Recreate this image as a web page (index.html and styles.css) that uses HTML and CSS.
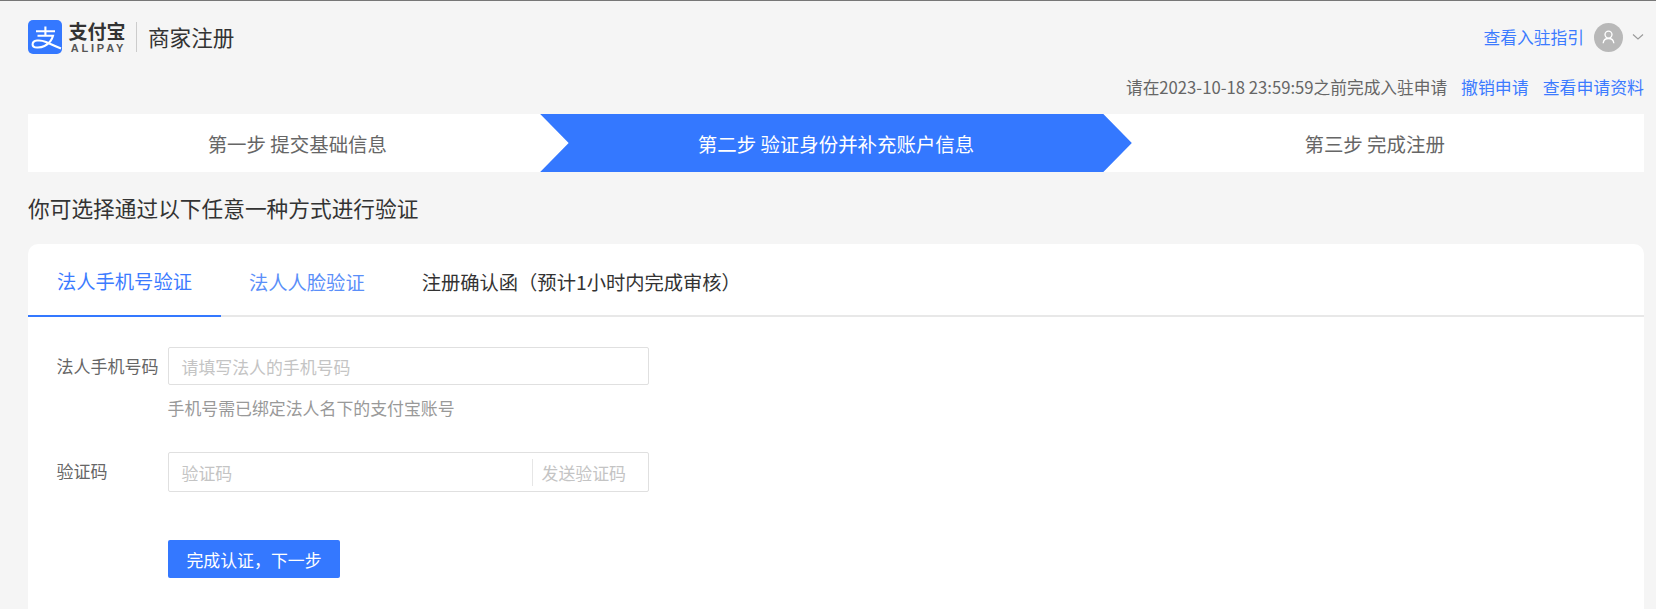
FILE: index.html
```html
<!DOCTYPE html>
<html lang="zh-CN">
<head>
<meta charset="utf-8">
<title>商家注册</title>
<link rel="stylesheet" href="styles.css">
</head>
<body>
<div class="page">
  <header class="top">
    <div class="brand">
      <svg class="logo-icon" viewBox="0 0 34 34" width="34" height="34" aria-hidden="true">
        <rect width="34" height="34" rx="5" fill="#3478ff"/>
        <path d="M8 11.2H27M17.4 6.5V16M9.5 15.8H25C24 20 21 23.8 16.5 26C12.5 28 4.6 28.6 4.6 24.4C4.6 20 12 19.4 18 22C22 23.7 26 25.8 33 28.4" fill="none" stroke="#fff" stroke-width="2.1"/>
      </svg>
      <div class="logo-text">
        <span class="logo-cn">支付宝</span>
        <span class="logo-en">ALIPAY</span>
      </div>
      <span class="brand-sep"></span>
      <span class="brand-title">商家注册</span>
    </div>
    <div class="user">
      <a class="link">查看入驻指引</a>
      <span class="avatar">
        <svg viewBox="0 0 30 30" width="30" height="30" aria-hidden="true">
          <circle cx="15" cy="12" r="3.6" fill="none" stroke="#fff" stroke-width="1.4"/>
          <path d="M9.5 21C9.8 17.6 12 16 15 16S20.2 17.6 20.5 21" fill="none" stroke="#fff" stroke-width="1.4"/>
        </svg>
      </span>
      <svg class="chev" viewBox="0 0 12 8" width="12" height="8" aria-hidden="true"><path d="M1 1.5L6 6L11 1.5" fill="none" stroke="#999" stroke-width="1.1"/></svg>
    </div>
  </header>

  <div class="deadline">
    <span class="deadline-text">请在2023-10-18 23:59:59之前完成入驻申请</span>
    <a class="link">撤销申请</a>
    <a class="link">查看申请资料</a>
  </div>

  <div class="steps">
    <div class="step">第一步 提交基础信息</div>
    <div class="step step-active">第二步 验证身份并补充账户信息</div>
    <div class="step">第三步 完成注册</div>
  </div>

  <h1 class="headline">你可选择通过以下任意一种方式进行验证</h1>

  <section class="card">
    <nav class="tabs">
      <a class="tab tab-active">法人手机号验证</a>
      <a class="tab tab-link">法人人脸验证</a>
      <a class="tab tab-plain">注册确认函（预计1小时内完成审核）</a>
    </nav>
    <form class="form">
      <div class="row">
        <label class="label">法人手机号码</label>
        <div class="field">
          <div class="input"><span class="ph">请填写法人的手机号码</span></div>
          <p class="help">手机号需已绑定法人名下的支付宝账号</p>
        </div>
      </div>
      <div class="row row-code">
        <label class="label">验证码</label>
        <div class="field">
          <div class="input input-code">
            <span class="ph">验证码</span>
            <span class="send">发送验证码</span>
          </div>
        </div>
      </div>
      <button class="submit" type="button">完成认证，下一步</button>
    </form>
  </section>
</div>
</body>
</html>
```
FILE: styles.css
```css
* { box-sizing: border-box; }
html, body { margin: 0; height: 100%; overflow: hidden; }
body {
  background: #f5f5f5;
  border-top: 1px solid #777;
  font-family: "Noto Sans CJK SC", "Noto Sans", sans-serif;
  color: #333;
}
.page { display: flex; flex-direction: column; height: 100%; padding: 0 12px 0 28px; }
.link { color: #3c7bff; }

.top { display: flex; flex: none; justify-content: space-between; align-items: center; height: 72px; }
.brand { display: flex; align-items: center; }
.logo-icon { display: block; }
.logo-text { display: flex; flex-direction: column; align-items: center; margin-left: 6px; width: 58px; color: #333; }
.logo-cn { font-size: 19px; font-weight: 700; line-height: 22px; }
.logo-en { font-family: "Liberation Sans", sans-serif; font-size: 11px; line-height: 12px; letter-spacing: 2.8px; margin-right: -2.8px; font-weight: 700; color: #555; }
.brand-sep { width: 1px; height: 30px; background: #ccc; margin: 0 11px 0 10px; }
.brand-title { font-size: 21.6px; line-height: 30px; color: #333; }

.user { display: flex; align-items: center; font-size: 16.75px; }
.avatar { width: 29px; height: 29px; border-radius: 50%; background: #b8b8b8; margin-left: 10px; }
.avatar svg { display: block; width: 29px; height: 29px; }
.chev { margin-left: 9px; }

.deadline { display: flex; flex: none; justify-content: flex-end; gap: 14px; height: 41px; align-items: center; font-size: 16.9px; color: #666; padding-bottom: 14px; }
.deadline-text { font-size: 16.7px; }

.steps { display: grid; flex: none; grid-template-columns: repeat(3, 1fr); background: #fff; height: 58px; }
.step { display: flex; align-items: center; justify-content: center; font-size: 19.45px; color: #666; }
.step-active {
  margin: 0 -26.5px;
  background: #3478ff;
  color: #fff;
  clip-path: polygon(0 0, calc(100% - 28.5px) 0, 100% 50%, calc(100% - 28.5px) 100%, 0 100%, 28.5px 50%);
}

.headline { flex: none; margin: 0; height: 72px; display: flex; align-items: center; font-size: 21.7px; font-weight: 400; color: #333; padding-bottom: 2px; }

.card { flex: 1; min-height: 0; background: #fff; border-radius: 10px 10px 0 0; }
.tabs { display: flex; height: 73px; border-bottom: 2px solid #e8e8e8; }
.tab { display: flex; align-items: center; height: 73px; padding: 2px 28px 0; font-size: 19.3px; color: #333; }
.tab-active { width: 193px; padding-left: 29px; color: #3c7bff; border-bottom: 2px solid #3478ff; }
.tab-link { color: #5b8ff9; }
.tab-plain { padding-left: 29px; }

.form { padding: 30px 0 0 28px; }
.row { display: flex; }
.row-code { margin-top: 31px; }
.label { width: 111.5px; padding-left: 0.5px; font-size: 17px; line-height: 37px; color: #666; }
.field { width: 481px; }
.input { display: flex; align-items: center; height: 38px; border: 1px solid #e0e0e0; border-radius: 2px; padding: 0 13px; font-size: 16.9px; }
.ph { flex: 1; color: #c4c4c4; }
.input-code { height: 40px; padding-right: 0; }
.send { width: 116px; height: 27px; border-left: 1px solid #e6e6e6; padding-left: 9px; line-height: 27px; color: #c4c4c4; }
.help { margin: 0; padding-top: 10px; font-size: 16.9px; line-height: 26px; color: #999; }
.submit { display: block; margin: 48px 0 0 111.5px; width: 172px; height: 38px; padding: 0 0 0 1px; border: 0; border-radius: 2px; background: #3478ff; color: #fff; font: inherit; font-size: 16.9px; }
```
